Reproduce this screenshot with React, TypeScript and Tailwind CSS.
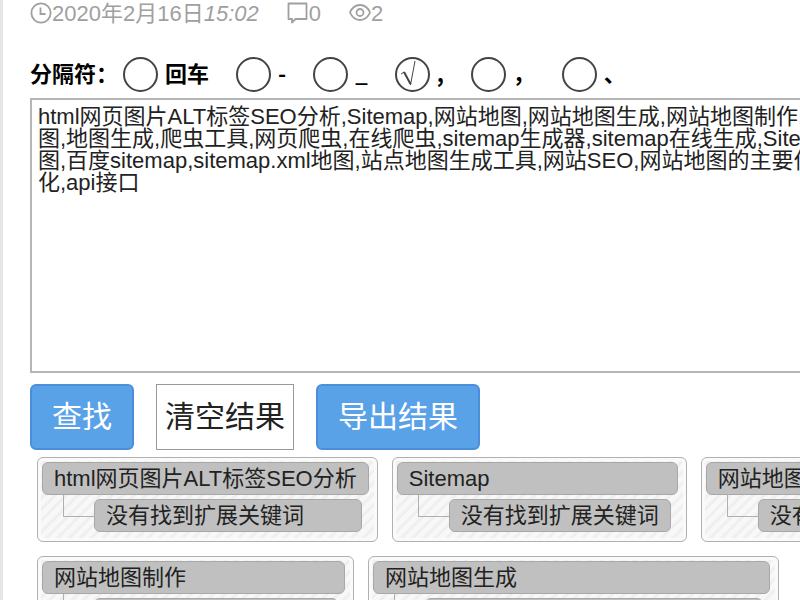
import React, { useState } from "react";

const separators = [
  { value: "enter", label: "回车" },
  { value: "dash", label: "-" },
  { value: "underscore", label: "_" },
  { value: "comma", label: "," },
  { value: "cn-comma", label: "，" },
  { value: "pause", label: "、" },
];

const defaultKeywords = [
  "html网页图片ALT标签SEO分析,Sitemap,网站地图,网站地图生成,网站地图制作,网站地图",
  "图,地图生成,爬虫工具,网页爬虫,在线爬虫,sitemap生成器,sitemap在线生成,Sitemap",
  "图,百度sitemap,sitemap.xml地图,站点地图生成工具,网站SEO,网站地图的主要作用",
  "化,api接口",
].join("\n");

const EMPTY = "没有找到扩展关键词";

const resultRows = [
  [
    { title: "html网页图片ALT标签SEO分析", child: EMPTY, width: "" },
    { title: "Sitemap", child: EMPTY, width: "" },
    { title: "网站地图", child: EMPTY, width: "" },
  ],
  [
    { title: "网站地图制作", child: EMPTY, width: "w-[317px]" },
    { title: "网站地图生成", child: EMPTY, width: "w-[411px]" },
  ],
];

const ClockIcon = () => (
  <svg className="h-[22px] w-[22px]" viewBox="0 0 22 22" fill="none" stroke="currentColor" strokeWidth="1.8">
    <circle cx="11" cy="11" r="9.6" />
    <path d="M10.500 5.500v6.500H15.500" />
  </svg>
);

const CommentIcon = () => (
  <svg className="h-[22px] w-[22px]" viewBox="0 0 22 22" fill="none" stroke="currentColor" strokeWidth="1.8">
    <path d="M1.500 1.500h18v15.500H8.500L5 20.500V17H1.500z" strokeLinejoin="round" />
  </svg>
);

const EyeIcon = () => (
  <svg className="h-[22px] w-[22px]" viewBox="0 0 22 22" fill="none" stroke="currentColor" strokeWidth="1.8">
    <path d="M1 10.500C3 5.800 6.500 3 11 3s8 2.800 10 7.500C19 15.200 15.500 18 11 18S3 15.200 1 10.500z" />
    <circle cx="11" cy="10.500" r="3.500" />
  </svg>
);

type CardProps = { title: string; child: string; width: string };

const ResultCard = ({ title, child, width }: CardProps) => (
  <li
    className={`shrink-0 rounded-md border border-[#b0b0b0] bg-[repeating-linear-gradient(135deg,#f8f8f8_0px,#f8f8f8_4px,#efefef_6px,#efefef_8px)] pt-1 pr-2 pb-[9px] pl-1 shadow-[inset_0_0_0_3px_#fafafa] ${width}`}
  >
    <div className="rounded-md border border-[#a8a8a8] bg-[#c0c0c0] px-[11px] leading-[31px]">{title}</div>
    <div className="flex pr-[7px]">
      <span className="ml-[21px] h-[22px] w-[31px] shrink-0 border-b border-l border-[#b0b0b0]" />
      <div className="mt-1 flex-1 rounded-md border border-[#a8a8a8] bg-[#c0c0c0] px-[11px] leading-[31px]">{child}</div>
    </div>
  </li>
);

const App = () => {
  const [separator, setSeparator] = useState("comma");
  const [keywords, setKeywords] = useState(defaultKeywords);

  return (
    <div className="h-screen overflow-hidden border-l-3 border-[#e6e6e6] bg-white pl-[27px] font-['Liberation_Sans','Noto_Sans_CJK_SC',sans-serif] text-[22px] whitespace-nowrap text-[#222]">
      <div className="flex h-[26px] items-center gap-7 text-[#a0a0a0]">
        <span className="flex items-center">
          <ClockIcon />
          2020年2月16日<em>15:02</em>
        </span>
        <span className="flex items-center">
          <CommentIcon />0
        </span>
        <span className="flex items-center">
          <EyeIcon />2
        </span>
      </div>

      <div
        role="radiogroup"
        aria-labelledby="separator-label"
        className="mt-[31px] flex h-[35px] items-start font-['Noto_Sans_CJK_SC',sans-serif] leading-[30px] font-bold text-black"
      >
        <span id="separator-label" className="mr-[5px]">分隔符：</span>
        <div className="flex items-start gap-[27px]">
          {separators.map((s) => (
            <label key={s.value} className="flex items-start gap-[7px]">
              <span className="grid">
                <input
                  type="radio"
                  name="separator"
                  value={s.value}
                  checked={separator === s.value}
                  onChange={() => setSeparator(s.value)}
                  className="peer col-start-1 row-start-1 h-[35px] w-[35px] appearance-none rounded-full border-2 border-[#444] bg-white"
                />
                <svg
                  className="pointer-events-none invisible col-start-1 row-start-1 h-[35px] w-[35px] peer-checked:visible"
                  viewBox="0 0 35 35"
                  fill="none"
                  stroke="#444"
                >
                  <path d="M6 17l3-2" strokeWidth="1" />
                  <path d="M9 15l6.500 12" strokeWidth="2" />
                  <path d="M15.500 28L20 4" strokeWidth="1" />
                </svg>
              </span>
              {s.label}
            </label>
          ))}
        </div>
      </div>

      <textarea
        aria-label="关键词"
        wrap="off"
        value={keywords}
        onChange={(e) => setKeywords(e.target.value)}
        className="mt-1.5 block h-[275px] w-[calc(100%+120px)] resize-none overflow-hidden border-2 border-[#b5b5b5] bg-white px-1.5 py-1.5 leading-[22px] outline-none"
      />

      <div className="mt-[11px] flex gap-[22px] text-3xl">
        <button type="button" className="h-[66px] rounded-md border-2 border-[#4b8fdc] bg-[#5aa2e8] px-[20px] text-white">
          查找
        </button>
        <button type="button" className="h-[66px] border border-[#999] bg-white px-2">
          清空结果
        </button>
        <button type="button" className="h-[66px] rounded-md border-2 border-[#4b8fdc] bg-[#5aa2e8] px-[20px] text-white">
          导出结果
        </button>
      </div>

      <div className="mt-[7px] ml-[7px] flex flex-col gap-3.5">
        {resultRows.map((row, i) => (
          <ul key={i} className="flex gap-3.5">
            {row.map((item) => (
              <ResultCard key={item.title} {...item} />
            ))}
          </ul>
        ))}
      </div>
    </div>
  );
};

export default App;
